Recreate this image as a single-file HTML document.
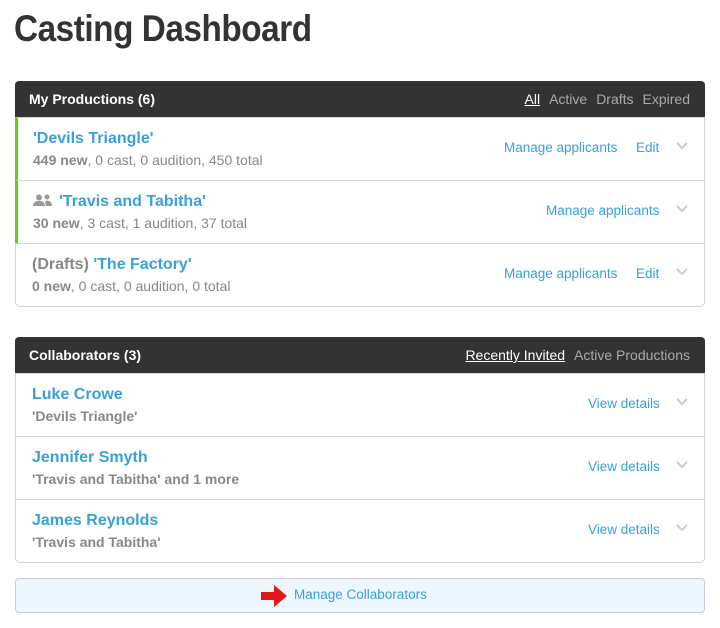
<!DOCTYPE html>
<html><head><style>
*{margin:0;padding:0;box-sizing:border-box}
body{width:720px;height:628px;background:#fff;font-family:"Liberation Sans",Arial,sans-serif;position:relative;overflow:hidden}
h1{position:absolute;left:14px;top:8px;font-size:37px;font-weight:bold;color:#333;letter-spacing:-0.5px;transform:scaleX(0.9);transform-origin:0 0;white-space:nowrap}
.panel{position:absolute;left:15px;width:690px;border:1px solid #d4d4d4;border-radius:5px;background:#fff}
.hd{height:36px;background:#333;border-radius:4px 4px 0 0;color:#fff;font-weight:bold;font-size:14px;padding:0 14px;line-height:36px;position:relative;margin:-1px -1px 0 -1px}
.hd .tabs{position:absolute;right:15px;top:0;font-weight:normal;color:#aaa;font-size:14px}
.hd .tabs span{margin-left:9px}
.hd .tabs u{color:#fff}
.row{height:63px;border-top:1px solid #d4d4d4;position:relative;padding-left:16px}
.row:first-of-type{border-top:none}
.row.g{border-left:3px solid #66cc11;padding-left:15px;margin-left:-1px}
.t{position:absolute;top:12px;font-size:16px;font-weight:bold;color:#3aa0d8}
.s{position:absolute;top:34px;font-size:14px;color:#888}
.s b{color:#888}
.gr{color:#888}
.a{position:absolute;top:22px;font-size:13.5px;color:#3aa0d8}
.chev{position:absolute;right:16px;top:24px;width:12px;height:8px}
.btn{position:absolute;left:15px;top:578px;width:690px;height:35px;background:#eef7fd;border:1px solid #ccd;border-radius:4px}
</style></head><body>
<h1>Casting Dashboard</h1>

<div class="panel" style="top:81px;height:226px">
<div class="hd">My Productions (6)<div class="tabs"><u>All</u><span>Active</span><span>Drafts</span><span>Expired</span></div></div>
<div class="row g"><div class="t">'Devils Triangle'</div><div class="s"><b>449 new</b>, 0 cast, 0 audition, 450 total</div>
<div class="a" style="left:486px">Manage applicants</div><div class="a" style="left:618px">Edit</div>
<svg class="chev" viewBox="0 0 12 8"><path d="M1 1l5 5 5-5" stroke="#ccc" stroke-width="2" fill="none"/></svg></div>
<div class="row g"><div class="t"><span style="display:inline-block;vertical-align:middle;margin-right:6px"><svg width="20" height="12" viewBox="0 0 20 12"><circle cx="6" cy="3.5" r="3" fill="#999"/><path d="M0 12c0-4 3-5 6-5s6 1 6 5z" fill="#999"/><circle cx="14" cy="3" r="2.5" fill="#999"/><path d="M12 7c3-1 7 0 7 5h-6z" fill="#999"/></svg></span>'Travis and Tabitha'</div><div class="s"><b>30 new</b>, 3 cast, 1 audition, 37 total</div>
<div class="a" style="left:528px">Manage applicants</div>
<svg class="chev" viewBox="0 0 12 8"><path d="M1 1l5 5 5-5" stroke="#ccc" stroke-width="2" fill="none"/></svg></div>
<div class="row"><div class="t"><span class="gr">(Drafts)</span> 'The Factory'</div><div class="s"><b>0 new</b>, 0 cast, 0 audition, 0 total</div>
<div class="a" style="left:488px">Manage applicants</div><div class="a" style="left:620px">Edit</div>
<svg class="chev" viewBox="0 0 12 8"><path d="M1 1l5 5 5-5" stroke="#ccc" stroke-width="2" fill="none"/></svg></div>
</div>

<div class="panel" style="top:337px;height:226px">
<div class="hd">Collaborators (3)<div class="tabs"><u>Recently Invited</u><span>Active Productions</span></div></div>
<div class="row"><div class="t">Luke Crowe</div><div class="s" style="font-weight:bold">'Devils Triangle'</div>
<div class="a" style="left:572px">View details</div>
<svg class="chev" viewBox="0 0 12 8"><path d="M1 1l5 5 5-5" stroke="#ccc" stroke-width="2" fill="none"/></svg></div>
<div class="row"><div class="t">Jennifer Smyth</div><div class="s" style="font-weight:bold">'Travis and Tabitha' and 1 more</div>
<div class="a" style="left:572px">View details</div>
<svg class="chev" viewBox="0 0 12 8"><path d="M1 1l5 5 5-5" stroke="#ccc" stroke-width="2" fill="none"/></svg></div>
<div class="row"><div class="t">James Reynolds</div><div class="s" style="font-weight:bold">'Travis and Tabitha'</div>
<div class="a" style="left:572px">View details</div>
<svg class="chev" viewBox="0 0 12 8"><path d="M1 1l5 5 5-5" stroke="#ccc" stroke-width="2" fill="none"/></svg></div>
</div>

<div class="btn">
<svg style="position:absolute;left:245px;top:6px" width="27" height="22" viewBox="0 0 27 22"><path d="M0 7h13V0l13 11-13 11v-7H0z" fill="#e01818"/></svg>
<div style="position:absolute;left:278px;top:8px;font-size:13.5px;color:#3aa0d8">Manage Collaborators</div>
</div>
</body></html>
